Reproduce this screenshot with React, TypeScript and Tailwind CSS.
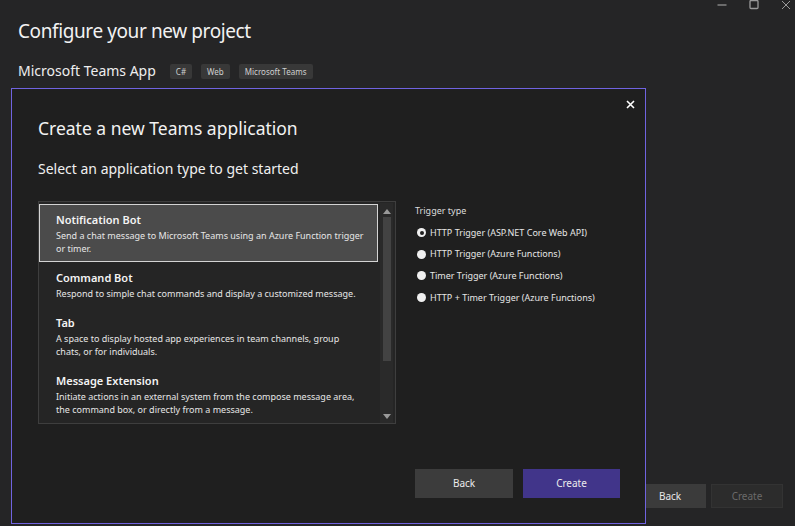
import React from "react";

const items = [
  {
    title: "Notification Bot",
    desc: ["Send a chat message to Microsoft Teams using an Azure Function trigger", "or timer."],
    selected: true,
  },
  {
    title: "Command Bot",
    desc: ["Respond to simple chat commands and display a customized message."],
  },
  {
    title: "Tab",
    desc: ["A space to display hosted app experiences in team channels, group", "chats, or for individuals."],
  },
  {
    title: "Message Extension",
    desc: ["Initiate actions in an external system from the compose message area,", "the command box, or directly from a message."],
  },
];

const triggers = [
  "HTTP Trigger (ASP.NET Core Web API)",
  "HTTP Trigger (Azure Functions)",
  "Timer Trigger (Azure Functions)",
  "HTTP + Timer Trigger (Azure Functions)",
];

export default function App() {
  return (
    <div
      className="relative w-[795px] h-[526px] overflow-hidden bg-[#252526] text-white flex flex-col"
      style={{ fontFamily: '"Noto Sans", "Open Sans", sans-serif' }}
    >
      {/* window controls */}
      <div className="flex justify-end items-start h-[12px] pr-[4px] gap-[22px]">
        <svg width="10" height="10" viewBox="0 0 10 10">
          <line x1="0.5" y1="5" x2="9.5" y2="5" stroke="#9a9a9a" strokeWidth="1.2" />
        </svg>
        <svg width="10" height="10" viewBox="0 0 10 10">
          <rect x="1" y="0.5" width="8" height="8" rx="1" fill="none" stroke="#9a9a9a" strokeWidth="1.3" />
        </svg>
        <svg width="10" height="10" viewBox="0 0 10 10">
          <path d="M1 1 L9 9 M9 1 L1 9" stroke="#9a9a9a" strokeWidth="1" />
        </svg>
      </div>

      <div className="pl-[18px] mt-[7px] text-[19px] leading-[24px] tracking-[-0.4px] text-[#f2f2f2]">Configure your new project</div>
      <div className="pl-[18px] mt-[18px] flex items-center">
        <span className="text-[14px] leading-[20px] text-[#eeeeee]">Microsoft Teams App</span>
        <div className="flex gap-[9px] ml-[14px]">
          {["C#", "Web", "Microsoft Teams"].map((t) => (
            <span key={t} className="bg-[#383838] rounded-[2px] px-[6px] h-[15px] leading-[15px] text-[8px] text-[#cfcfcf]">
              {t}
            </span>
          ))}
        </div>
      </div>

      <div className="flex-1" />
      {/* background buttons */}
      <div className="flex justify-end gap-[5px] pr-[12px] pb-[18px]">
        <div className="w-[72px] h-[24px] bg-[#3b3b3b] text-[10px] flex items-center justify-center text-[#e8e8e8]">Back</div>
        <div className="w-[72px] h-[24px] bg-[#2c2c2c] border border-[#333333] text-[10px] flex items-center justify-center text-[#6a6a6a]">Create</div>
      </div>

      {/* modal dialog */}
      <div className="absolute left-[11px] top-[88px] w-[635px] h-[436px] bg-[#1f1f1f] border border-[#7063e0] flex flex-col">
        <div className="flex justify-end pr-[10px] pt-[11px] h-[21px]">
          <svg width="9" height="9" viewBox="0 0 9 9">
            <path d="M1 1 L8 8 M8 1 L1 8" stroke="#ffffff" strokeWidth="1.6" />
          </svg>
        </div>
        <div className="pl-[26px] mt-[6px] text-[17.5px] leading-[24px] text-[#f2f2f2]">Create a new Teams application</div>
        <div className="pl-[26px] mt-[20px] text-[14px] leading-[18px] text-[#f0f0f0]">Select an application type to get started</div>

        <div className="flex mt-[23px] pl-[26px]">
          {/* list */}
          <div className="w-[358px] h-[223px] border border-[#3e3e3e] bg-[#252525] flex pt-[2px] pr-[2px]">
            <div className="flex-1 flex flex-col overflow-hidden">
              {items.map((it) => (
                <div
                  key={it.title}
                  className={
                    "shrink-0 " +
                    (it.selected
                      ? "bg-[#4b4b4b] border border-[#d4d4d4] pl-[16px] pt-[7px] pb-[6px]"
                      : "pl-[17px] pt-[8px] pb-[7px]")
                  }
                >
                  <div className="text-[11px] leading-[15px] font-semibold text-[#f4f4f4] mb-[2px]">{it.title}</div>
                  {it.desc.map((d) => (
                    <div key={d} className="text-[9px] leading-[13px] text-[#e6e6e6] whitespace-nowrap">
                      {d}
                    </div>
                  ))}
                </div>
              ))}
            </div>
            <div className="w-[13px] ml-[2px] -mt-[1px] bg-[#2a2a2a] flex flex-col items-center">
              <svg width="8" height="5" viewBox="0 0 8 5" className="mt-[6px]">
                <path d="M0 5 L4 0 L8 5 Z" fill="#9a9a9a" />
              </svg>
              <div className="w-[8px] h-[144px] mt-[3px] bg-[#434343]" />
              <div className="flex-1" />
              <svg width="8" height="5" viewBox="0 0 8 5" className="mb-[4px]">
                <path d="M0 0 L8 0 L4 5 Z" fill="#9a9a9a" />
              </svg>
            </div>
          </div>

          {/* trigger type */}
          <div className="ml-[19px] flex flex-col">
            <div className="text-[9px] leading-[13px] text-[#dcdcdc] mt-[3px]">Trigger type</div>
            <div className="flex flex-col mt-[9px] gap-[8.7px]">
              {triggers.map((t, i) => (
                <div key={t} className="flex items-center h-[13px]">
                  <div className="ml-[2px] w-[9px] h-[9px] rounded-full bg-[#f0f0f0] flex items-center justify-center">
                    {i === 0 && <div className="w-[4px] h-[4px] rounded-full bg-[#1f1f1f]" />}
                  </div>
                  <span className="ml-[4px] text-[9px] text-[#e6e6e6]">{t}</span>
                </div>
              ))}
            </div>
          </div>
        </div>

        <div className="flex-1" />
        <div className="flex justify-end gap-[10px] pr-[25px] pb-[25px]">
          <div className="w-[98px] h-[29px] bg-[#3c3c3c] text-[10px] flex items-center justify-center text-[#ececec]">Back</div>
          <div className="w-[97px] h-[29px] bg-[#41358a] text-[10px] flex items-center justify-center text-[#ececec]">Create</div>
        </div>
      </div>
    </div>
  );
}
